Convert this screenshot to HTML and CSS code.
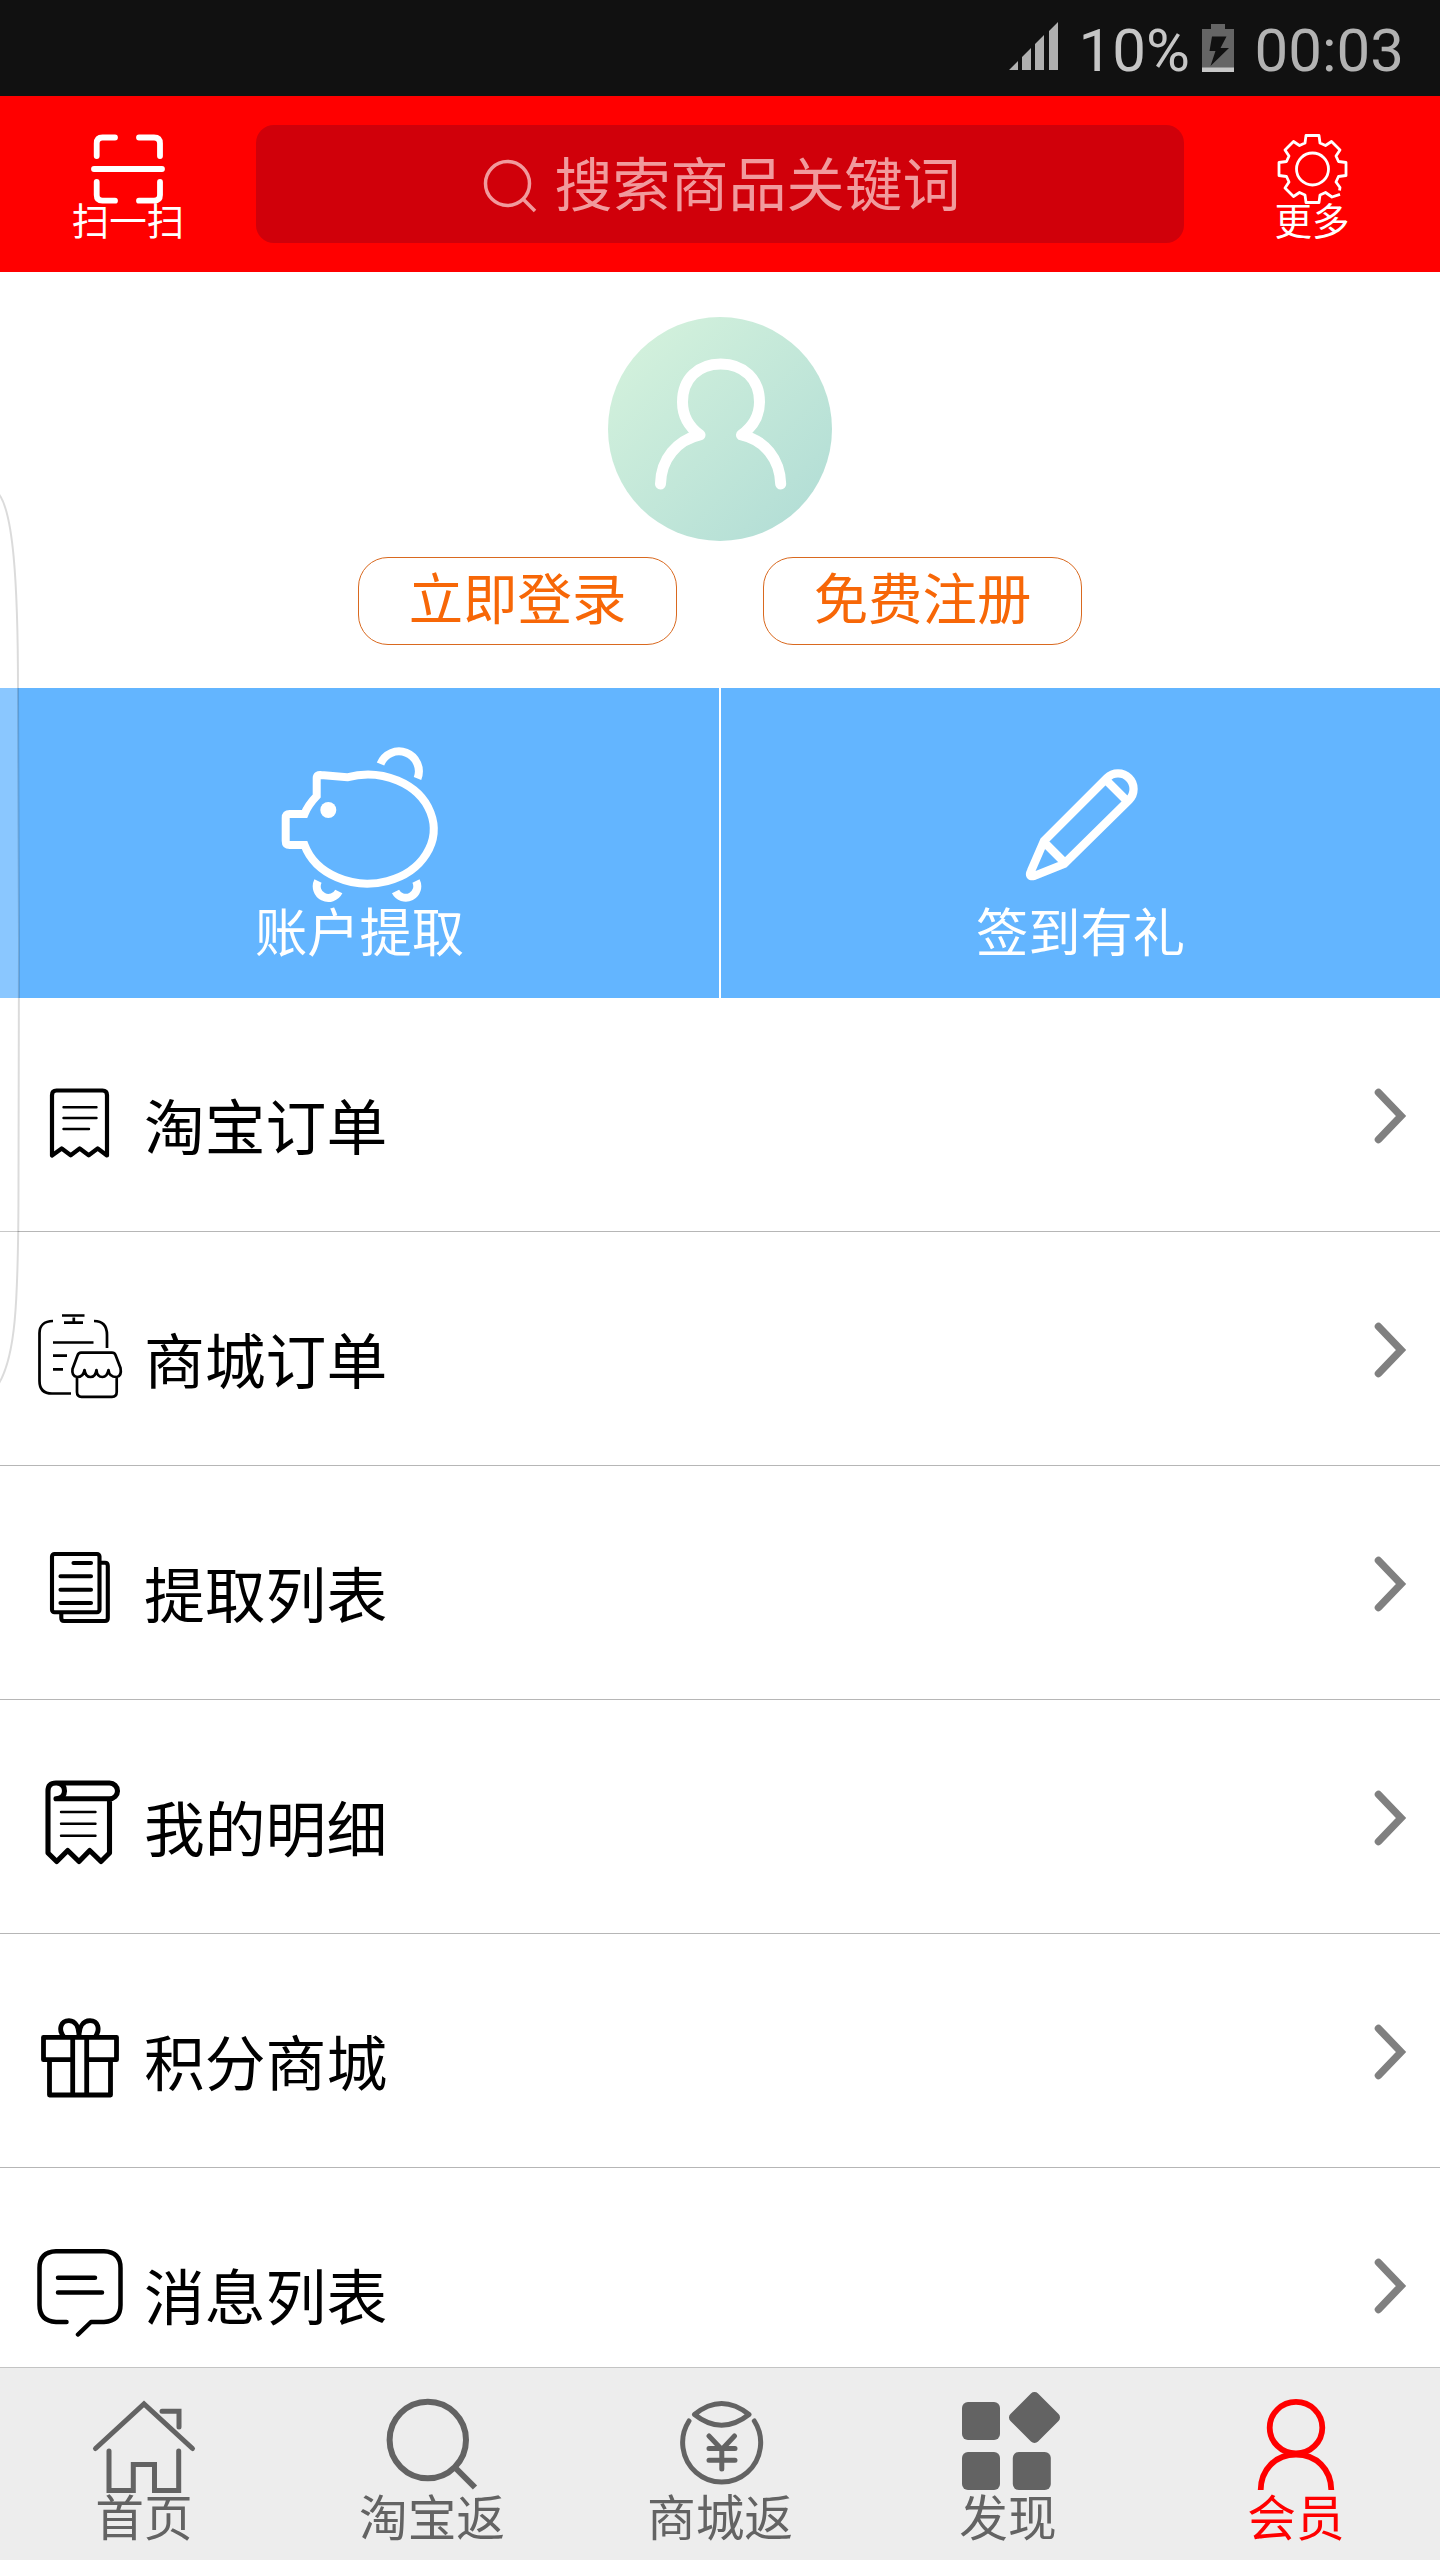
FILE: index.html
```html
<!DOCTYPE html>
<html lang="zh-CN">
<head>
<meta charset="utf-8">
<title>会员</title>
<link rel="stylesheet" href="styles.css">
</head>
<body>
<div class="app">
  <div class="status">
    <svg class="signal" width="49" height="48" viewBox="1009 22 49 48"><path d="M1009 70L1018 61V70ZM1022 70V57L1031 48V70ZM1035 70V44L1044 35V70ZM1049 70V31L1058 22V70Z"/></svg>
    <span class="percent">10%</span>
    <svg class="battery" width="32" height="48" viewBox="1202 24 32 48"><path fill="#656565" d="M1211 24h14v5h9v43h-32v-43h9z"/><path fill="#c8c8c8" d="M1202 67.500h32v4.500h-32z"/><path fill="#111" d="M1212 36.500h14.500l-6 11.500h8.500l-18.500 18 5-15h-6z"/></svg>
    <span class="clock">00:03</span>
  </div>

  <header class="header">
    <a class="header-item">
      <svg class="line" width="256" height="104" viewBox="0 96 256 104" stroke-width="5.800" stroke-linecap="round"><path d="M115 137.500H102.500Q96.700 137.500 96.700 143.500V156M139 137.500H154Q160 137.500 160 143.500V156M96.700 182V195Q96.700 200.700 102.500 200.700H115M160 182V195Q160 200.700 154 200.700H139M94 169H162"/></svg>
      <span>扫一扫</span>
    </a>
    <div class="search">
      <svg class="lens" width="56" height="56" viewBox="482 158 56 56"><circle cx="507.500" cy="185.500" r="22"/><path d="M523 201L535 213"/></svg>
      <span>搜索商品关键词</span>
    </div>
    <a class="header-item">
      <svg class="line" width="256" height="104" viewBox="-128.500 -73 256 104" stroke-width="2.800" stroke-linejoin="round"><circle r="16"/><path d="M27.500 25.300L19.500 28L13 23.500L7.500 26L6.500 33.500H-6.500L-7.500 26L-13 23.500L-19 27.500L-27.500 19L-23.500 13L-26 7.500L-33.500 6.500V-6.500L-26 -7.500L-23.500 -13L-27.500 -19L-19 -27.500L-13 -23.500L-7.500 -26L-6.500 -33.500H6.500L7.500 -26L13 -23.500L19 -27.500L27.500 -19L23.500 -13L26 -7.500L33.500 -6.500V6.500L26 7.500L23.500 13L27.500 18.500L27 21.500"/></svg>
      <span>更多</span>
    </a>
  </header>

  <section class="profile">
    <div class="avatar">
      <svg class="line" width="224" height="224" viewBox="608 317 224 224" stroke-width="11" stroke-linecap="round" stroke-linejoin="round"><path d="M660.500 484C661 459 677 440 700 435C689 427 682.500 416 682.500 402C682.500 379 698 364 720.700 364C743.500 364 759.500 379 759.500 402C759.500 416 752.500 427 741.500 435C764.500 440 780 459 780.700 484"/></svg>
    </div>
    <div class="auth">
      <a class="pill">立即登录</a>
      <a class="pill">免费注册</a>
    </div>
  </section>

  <section class="actions">
    <a class="action">
      <svg class="line" width="719" height="212" viewBox="0 688 719 212" stroke-width="8"><path d="M304.500 845H289.700Q285.700 845 285.700 841V818Q285.700 814 289.700 814H304.500Q308 805 316.700 796V778Q316.700 774.500 321 775L347 777.300A66 54.500 0 1 1 304.500 845Z"/><circle class="eye" cx="328.300" cy="810" r="8"/><path d="M380.500 764A19 19 0 1 1 417.500 778.500M318 881A11.500 11.500 0 1 0 338.800 891.500M416 881A11.500 11.500 0 1 1 395.500 891.500"/></svg>
      <span>账户提取</span>
    </a>
    <a class="action">
      <svg class="line" width="719" height="212" viewBox="721 688 719 212" stroke-width="8.300" stroke-linejoin="round"><path d="M1107 778A15.500 15.500 0 0 1 1129 800L1064 864L1034 876Q1028 877 1031 871L1044 841ZM1106 780L1126 800M1044 842L1065 863"/></svg>
      <span>签到有礼</span>
    </a>
  </section>

  <nav class="list">
    <a class="row">
      <svg class="icon" width="144" height="233" viewBox="0 998 144 233" stroke-width="4.200" stroke-linejoin="round"><path d="M52 1155.500V1095Q52 1090.500 56.500 1090.500H102.500Q107 1090.500 107 1095V1155.500L97.700 1148.500L88.700 1155.300L79.700 1148.500L70.700 1155.300L61.700 1148.500Z"/><path stroke-width="2.400" stroke-linecap="round" d="M63.500 1107.200H96.500M63.500 1118H96.500M63.500 1129H89"/></svg>
      <span>淘宝订单</span>
      <svg class="chevron" width="40" height="60" viewBox="1370 1086 40 60"><path d="M1378.500 1092.500L1401 1116L1378.500 1139.500"/></svg>
    </a>
    <a class="row">
      <svg class="icon" width="144" height="233" viewBox="0 1232 144 233" stroke-width="2.700" stroke-linejoin="round"><path d="M53 1321C44 1321 39.500 1326 39.500 1333V1381Q39.500 1393.500 52 1393.500H71M94 1321C103 1321 107 1326 107 1335V1348M62 1315.500H84.500M64 1322.700H83M73.800 1317.500V1322M53 1342.500H93.500M53 1355.700H67M53 1369.300H63"/><path d="M81 1352.700H112Q114.500 1352.700 115.500 1355L120.500 1368Q122 1376 116.700 1377Q109 1377 108.500 1370Q107 1377 102.500 1377Q97 1377 96.500 1370Q95.500 1377 90.500 1377Q85.500 1377 84.500 1370Q83.500 1377 77 1377Q71.500 1376 72.500 1369L77.500 1355.500Q78.500 1352.700 81 1352.700ZM77 1377V1392Q77 1396.800 81.500 1396.800H112Q116.700 1396.800 116.700 1392V1377"/></svg>
      <span>商城订单</span>
      <svg class="chevron" width="40" height="60" viewBox="1370 1086 40 60"><path d="M1378.500 1092.500L1401 1116L1378.500 1139.500"/></svg>
    </a>
    <a class="row">
      <svg class="icon" width="144" height="233" viewBox="0 1466 144 233" stroke-width="4.100" stroke-linejoin="round"><rect x="52" y="1554" width="47.500" height="58.300" rx="2.500"/><path d="M100 1562.800H105Q107.800 1562.800 107.800 1566V1618Q107.800 1621 105 1621H64Q61.300 1621 61.300 1618V1613"/><path stroke-linecap="round" d="M73.500 1563H91M60.500 1576.300H91M60.500 1589.700H91M60.500 1603H91"/></svg>
      <span>提取列表</span>
      <svg class="chevron" width="40" height="60" viewBox="1370 1086 40 60"><path d="M1378.500 1092.500L1401 1116L1378.500 1139.500"/></svg>
    </a>
    <a class="row">
      <svg class="icon" width="144" height="233" viewBox="0 1700 144 233" stroke-width="5.100" stroke-linejoin="round" stroke-linecap="round"><path d="M48 1791V1853L56.700 1861.500L67.700 1850.500L79 1861.500L89.700 1850.500L101 1861.500L109.500 1853V1801M48 1791Q48 1783 56 1783H109.500A8 7.900 0 0 1 109.500 1798.800H56M57 1783Q64.500 1784 64.500 1791Q64.500 1798 56 1798.800"/><path stroke-width="2.400" d="M61 1812H95.500M61 1823.800H95.500M61 1835.700H95.500"/></svg>
      <span>我的明细</span>
      <svg class="chevron" width="40" height="60" viewBox="1370 1086 40 60"><path d="M1378.500 1092.500L1401 1116L1378.500 1139.500"/></svg>
    </a>
    <a class="row">
      <svg class="icon" width="144" height="233" viewBox="0 1934 144 233" stroke-width="4.800" stroke-linejoin="round"><path d="M72.700 2059.700H43.500V2037.300H116.500V2059.700H86.700M49.500 2059.700V2095H110.500V2059.700M72.700 2037.300V2095M86.700 2037.300V2095M63.500 2036.500C58 2029 61 2020.700 69 2020.700C76 2020.700 79 2028 79 2037C79 2028 82.500 2020.700 90 2020.700C98 2020.700 100.500 2029 95.500 2036.500"/></svg>
      <span>积分商城</span>
      <svg class="chevron" width="40" height="60" viewBox="1370 1086 40 60"><path d="M1378.500 1092.500L1401 1116L1378.500 1139.500"/></svg>
    </a>
    <a class="row">
      <svg class="icon" width="144" height="233" viewBox="0 2168 144 233" stroke-width="4.500" stroke-linejoin="round" stroke-linecap="round"><path d="M66.500 2322H56Q39.500 2321 39.500 2305V2268Q39.500 2252 56 2251.300H104Q120.500 2252 120.500 2268V2305Q120.500 2321 104 2322H91L78 2334.500M58 2277.700H95M58 2292.500H102"/></svg>
      <span>消息列表</span>
      <svg class="chevron" width="40" height="60" viewBox="1370 1086 40 60"><path d="M1378.500 1092.500L1401 1116L1378.500 1139.500"/></svg>
    </a>
  </nav>

  <nav class="tabs">
    <a class="tab">
      <svg class="icon" width="288" height="122" viewBox="0 2368 288 122" stroke-width="5" stroke-linecap="round"><path d="M95.500 2448.500L144 2404L192.500 2448.500M109 2451V2490.500H133.300V2464.500H154.500V2490.500H178.700V2451M162 2411.300H179V2427"/></svg>
      <span>首页</span>
    </a>
    <a class="tab">
      <svg class="icon" width="288" height="122" viewBox="288 2368 288 122" stroke-width="6"><circle cx="427.800" cy="2440" r="38.200"/><path d="M454 2466.500L475 2487.500"/></svg>
      <span>淘宝返</span>
    </a>
    <a class="tab">
      <svg class="icon" width="288" height="122" viewBox="576 2368 288 122" stroke-width="5" stroke-linecap="round" stroke-linejoin="round"><path d="M689 2421A39 39.500 0 1 0 754.300 2421M694.500 2414.500Q721.500 2392.500 749 2414.500Q721.500 2436 694.500 2414.500ZM709 2436L721.800 2449.500L734.500 2436M709 2448.500H735M709 2460.300H735M721.800 2449V2469"/></svg>
      <span>商城返</span>
    </a>
    <a class="tab">
      <svg class="solid" width="288" height="122" viewBox="864 2368 288 122"><rect x="962" y="2402" width="38" height="38" rx="6"/><rect x="962" y="2452" width="38" height="38" rx="6"/><rect x="1012.800" y="2452" width="38" height="38" rx="6"/><rect x="1015" y="2398" width="39" height="39" rx="5" transform="rotate(45 1034.500 2417.500)"/></svg>
      <span>发现</span>
    </a>
    <a class="tab active">
      <svg class="icon" width="288" height="122" viewBox="1152 2368 288 122" stroke-width="5.800"><ellipse cx="1296" cy="2427.700" rx="26.300" ry="25.800"/><path d="M1260.700 2490C1261 2469 1276 2454.500 1296 2454.500C1316 2454.500 1331 2469 1331.300 2490"/></svg>
      <span>会员</span>
    </a>
  </nav>

  <svg class="edge" width="24" height="896" viewBox="0 491 24 896"><path d="M-2 493C13 510 18 580 18 690L19 940L18.500 1180C18.500 1310 15 1358 -2 1385Z"/></svg>
</div>
</body>
</html>
```
FILE: styles.css
```css
* {
  box-sizing: border-box;
}

body {
  margin: 0;
  background: #fff;
  font-family: "Noto Sans CJK SC", sans-serif;
}

svg {
  display: block;
  flex: none;
  overflow: visible;
}

.app {
  position: relative;
  display: flex;
  flex-direction: column;
  width: 1440px;
  height: 2560px;
  overflow: hidden;
  white-space: nowrap;
}

.status {
  display: flex;
  flex: none;
  justify-content: flex-end;
  height: 96px;
  padding-right: 36px;
  background: #111;
  color: #b2b2b2;
  font: 60px/101px Roboto, sans-serif;
}

.signal {
  margin: 22px 21px 0 0;
  fill: #b0b0b0;
}

.percent {
  width: 123px;
  color: #c6c6c6;
}

.battery {
  margin: 24px 21px 0 0;
}

.line {
  fill: none;
  stroke: #fff;
}

.eye {
  fill: #fff;
  stroke: none;
}

.header {
  display: flex;
  flex: none;
  align-items: center;
  height: 176px;
  background: #f00;
}

.header-item {
  display: flex;
  flex-direction: column;
  align-self: flex-start;
  width: 256px;
  color: #fff;
  font-size: 37.5px;
  line-height: 38px;
  text-align: center;
}

.search {
  display: flex;
  flex: 1;
  align-items: center;
  justify-content: center;
  gap: 16px;
  height: 118px;
  padding-left: 3px;
  border-radius: 18px;
  background: #d0000a;
  color: #f19a9d;
  font-size: 58px;
  line-height: 112px;
}

.search span {
  height: 118px;
}

.lens {
  fill: none;
  stroke: #f19a9d;
  stroke-width: 3.5;
}

.profile {
  display: flex;
  flex: none;
  flex-direction: column;
  align-items: center;
  gap: 16px;
  height: 416px;
  padding-top: 45px;
}

.avatar {
  width: 224px;
  height: 224px;
  border-radius: 50%;
  background: linear-gradient(135deg, #d3f1dc 10%, #b3ded6 90%);
}

.auth {
  display: flex;
  gap: 86px;
}

.pill {
  width: 319px;
  height: 88px;
  border: 1px solid #d9691f;
  border-radius: 30px;
  color: #f76707;
  font-size: 54.4px;
  line-height: 76px;
  text-align: center;
}

.actions {
  display: flex;
  flex: none;
  gap: 2px;
  height: 310px;
}

.action {
  flex: 1;
  background: #63b5ff;
  color: #fff;
  font-size: 52.3px;
  line-height: 58px;
  text-align: center;
}

.list {
  flex: 1;
  min-height: 0;
  overflow: hidden;
}

.row {
  display: flex;
  height: 234px;
  padding-right: 30px;
  border-bottom: 1px solid #b6b6b6;
  color: #000;
  font-size: 60.8px;
  line-height: 251px;
}

.icon {
  fill: none;
  stroke: currentColor;
}

.chevron {
  margin: 88px 0 0 auto;
  fill: none;
  stroke: #808080;
  stroke-width: 7.5;
  stroke-linecap: round;
}

.tabs {
  display: flex;
  flex: none;
  height: 193px;
  border-top: 1px solid #c4c4c4;
  background: #ededed;
}

.tab {
  width: 288px;
  color: #636363;
  font-size: 48.7px;
  line-height: 50px;
  text-align: center;
}

.tab.active {
  color: #f00;
}

.solid {
  fill: currentColor;
}

.edge {
  position: absolute;
  top: 491px;
  left: 0;
  fill: rgba(255, 255, 255, 0.25);
  stroke: rgba(0, 0, 0, 0.14);
  stroke-width: 2;
}
```
